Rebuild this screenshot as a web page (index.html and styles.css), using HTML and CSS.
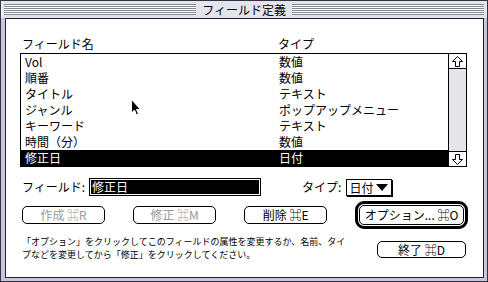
FILE: index.html
```html
<!DOCTYPE html>
<html lang="ja">
<head>
<meta charset="utf-8">
<title>フィールド定義</title>
<link rel="stylesheet" href="styles.css">
</head>
<body>
<div class="window">
  <div class="titlebar">
    <div class="stripes"></div>
    <div class="title">フィールド定義</div>
    <div class="stripes"></div>
  </div>
  <div class="content">
    <div class="headers"><span class="c-name">フィールド名</span><span class="c-type">タイプ</span></div>
    <div class="list">
      <div class="rows">
        <div class="row"><span class="c-name">Vol</span><span class="c-type">数値</span></div>
        <div class="row"><span class="c-name">順番</span><span class="c-type">数値</span></div>
        <div class="row"><span class="c-name">タイトル</span><span class="c-type">テキスト</span></div>
        <div class="row"><span class="c-name">ジャンル</span><span class="c-type">ポップアップメニュー</span></div>
        <div class="row"><span class="c-name">キーワード</span><span class="c-type">テキスト</span></div>
        <div class="row"><span class="c-name">時間（分）</span><span class="c-type">数値</span></div>
        <div class="row selected"><span class="c-name">修正日</span><span class="c-type">日付</span></div>
      </div>
      <div class="scrollbar">
        <div class="arrow up"><svg width="13" height="13" viewBox="0 0 13 13"><polygon points="6.5,1.5 11.5,6.5 8.5,6.5 8.5,11.5 4.5,11.5 4.5,6.5 1.5,6.5" fill="#fff" stroke="#000" stroke-width="1"/></svg></div>
        <div class="track"></div>
        <div class="arrow down"><svg width="13" height="13" viewBox="0 0 13 13"><polygon points="6.5,11.5 11.5,6.5 8.5,6.5 8.5,1.5 4.5,1.5 4.5,6.5 1.5,6.5" fill="#fff" stroke="#000" stroke-width="1"/></svg></div>
      </div>
    </div>
    <div class="field-row">
      <span class="label">フィールド:</span>
      <div class="field"><span class="field-text">修正日</span></div>
      <span class="label type-label">タイプ:</span>
      <div class="popup"><span>日付</span><span class="tri"></span></div>
    </div>
    <div class="buttons">
      <div class="btn disabled">作成 ⌘R</div>
      <div class="btn disabled">修正 ⌘M</div>
      <div class="btn">削除 ⌘E</div>
      <div class="default-ring"><div class="btn inner">オプション... ⌘O</div></div>
    </div>
    <div class="bottom">
      <p class="help">「オプション」をクリックしてこのフィールドの属性を変更するか、名前、タイプなどを変更してから「修正」をクリックしてください。</p>
      <div class="btn done">終了 ⌘D</div>
    </div>
  </div>
  <svg class="cursor" width="11" height="17" viewBox="0 0 11 17"><path d="M0.5,0.5 L0.5,14 L3.5,11 L5.5,16 L7.5,15 L5.5,10.5 L9.5,10.5 Z" fill="#000" stroke="#fff" stroke-width="1"/></svg>
</div>
</body>
</html>
```
FILE: styles.css
```css
* { box-sizing: border-box; }
html, body { margin: 0; padding: 0; background: #fff; }
body {
  font-family: "Noto Sans CJK JP", "DejaVu Sans", sans-serif;
  font-size: 12px;
  color: #000;
}
.window {
  position: relative;
  width: 488px;
  height: 282px;
  border: 1px solid #333344;
  background: #c6c6de;
  display: flex;
  flex-direction: column;
}
.titlebar {
  height: 17px;
  flex: none;
  display: flex;
  align-items: center;
  background: #e4e4ec;
  padding: 0 3px 0 2px;
  border-left: 1px solid #fff;
}
.stripes {
  flex: 1;
  height: 11px;
  background: repeating-linear-gradient(to bottom, #84848e 0 1px, #ffffff 1px 2px);
}
.title {
  padding: 0 6px;
  line-height: 16px;
  font-size: 12px;
  white-space: nowrap;
}
.content {
  flex: 1;
  margin: 0 3px 3px 4px;
  border: 1px solid #22222e;
  background: #fff;
  padding: 17px 15px 0 14px;
  display: flex;
  flex-direction: column;
}
.headers {
  height: 16px;
  line-height: 16px;
  display: flex;
  padding-left: 2px;
  margin-bottom: 1px;
}
.headers .c-name { width: 256px; }
.list {
  width: 447px;
  height: 114px;
  border: 1px solid #000;
  display: flex;
}
.rows { flex: 1; }
.row {
  height: 16px;
  line-height: 16px;
  display: flex;
  padding-left: 4px;
  white-space: nowrap;
}
.row .c-name { width: 254px; }
.row.selected { background: #000; color: #fff; }
.scrollbar {
  width: 18px;
  border-left: 1px solid #000;
  display: flex;
  flex-direction: column;
  background: #e6e6ea;
}
.arrow {
  height: 15px;
  background: #fff;
  display: flex;
  align-items: center;
  justify-content: center;
}
.arrow.up { border-bottom: 1px solid #000; }
.arrow.down { border-top: 1px solid #000; }
.track { flex: 1; }
.field-row {
  margin-top: 11px;
  height: 18px;
  display: flex;
  align-items: center;
  padding-left: 2px;
}
.label { line-height: 16px; white-space: nowrap; }
.field {
  margin-left: 4px;
  width: 172px;
  height: 18px;
  border: 1px solid #000;
  padding: 1px;
  background: #fff;
}
.field-text {
  display: block;
  height: 14px;
  line-height: 14px;
  background: #000;
  color: #fff;
  padding-left: 1px;
}
.type-label { margin-left: 41px; }
.popup {
  margin-left: 5px;
  height: 17px;
  border: 1px solid #000;
  box-shadow: 1px 1px 0 #000;
  display: flex;
  align-items: center;
  padding: 0 3px 0 2px;
  gap: 3px;
  line-height: 15px;
}
.tri {
  width: 0;
  height: 0;
  border-left: 6px solid transparent;
  border-right: 6px solid transparent;
  border-top: 7px solid #000;
}
.buttons {
  margin-top: 5px;
  height: 28px;
  display: flex;
  align-items: center;
  gap: 28px;
  padding-left: 2px;
}
.btn {
  width: 84px;
  height: 18px;
  border: 1px solid #000;
  border-radius: 5px;
  display: flex;
  align-items: center;
  justify-content: center;
  line-height: 16px;
  white-space: nowrap;
  background: #fff;
}
.btn.disabled { color: #999; }
.default-ring {
  width: 114px;
  height: 28px;
  border: 3px solid #000;
  border-radius: 9px;
  padding: 1px;
}
.default-ring .inner { width: 100%; height: 100%; }
.bottom {
  margin-top: 6px;
  display: flex;
  align-items: flex-start;
  padding-left: 2px;
}
.help {
  margin: 0;
  width: 330px;
  font-size: 9px;
  line-height: 13px;
}
.btn.done {
  margin-left: 25px;
  margin-top: 6px;
  width: 89px;
  height: 17px;
}
.cursor {
  position: absolute;
  left: 130px;
  top: 98px;
}
```
